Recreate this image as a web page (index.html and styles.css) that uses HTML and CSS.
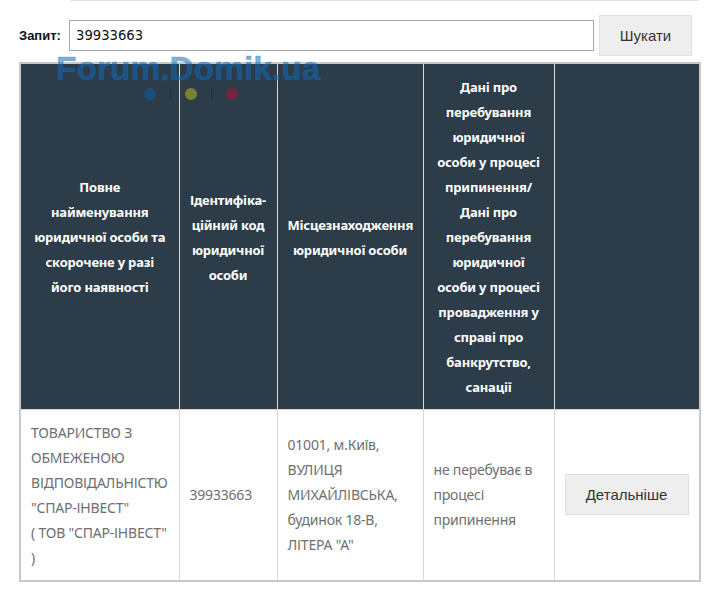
FILE: index.html
```html
<!DOCTYPE html>
<html lang="uk">
<head>
<meta charset="utf-8">
<title>Пошук</title>
<link rel="stylesheet" href="styles.css">
</head>
<body>
<div class="page">
  <div class="rule"></div>
  <form class="search">
    <label class="search-label" for="q">Запит:</label>
    <input class="search-input" id="q" type="text" value="39933663">
    <button class="btn btn-search" type="button">Шукати</button>
  </form>
  <table class="results">
    <colgroup>
      <col class="c1"><col class="c2"><col class="c3"><col class="c4"><col class="c5">
    </colgroup>
    <thead>
      <tr>
        <th>Повне найменування юридичної особи та скорочене у разі його наявності</th>
        <th>Ідентифіка-<br>ційний код юридичної особи</th>
        <th>Місцезнаходження юридичної особи</th>
        <th>Дані про перебування юридичної особи у процесі припинення/<br>Дані про перебування юридичної особи у процесі провадження у справі про банкрутство, санації</th>
        <th></th>
      </tr>
    </thead>
    <tbody>
      <tr>
        <td>ТОВАРИСТВО З ОБМЕЖЕНОЮ ВІДПОВІДАЛЬНІСТЮ "СПАР-ІНВЕСТ"<br>( ТОВ "СПАР-ІНВЕСТ" )</td>
        <td>39933663</td>
        <td>01001, м.Київ, ВУЛИЦЯ МИХАЙЛІВСЬКА, будинок 18-В, ЛІТЕРА "А"</td>
        <td>не перебуває в процесі припинення</td>
        <td><button class="btn btn-more" type="button">Детальніше</button></td>
      </tr>
    </tbody>
  </table>
  <div class="watermark">
    <div class="wm-text">Forum.Domik.ua</div>
    <div class="wm-dots">
      <span class="dot dot-blue"></span><span class="sep"></span>
      <span class="dot dot-green"></span><span class="sep"></span>
      <span class="dot dot-red"></span>
    </div>
  </div>
</div>
</body>
</html>
```
FILE: styles.css
```css
* { box-sizing: border-box; }
html, body { margin: 0; padding: 0; background: #fff; }
.page {
  position: relative;
  width: 708px;
  height: 596px;
  overflow: hidden;
  font-family: "Noto Sans", "Open Sans", sans-serif;
}
.rule {
  height: 1px;
  margin-left: 70px;
  margin-right: 9px;
  background: #e2e2e2;
}
.search {
  display: flex;
  align-items: center;
  height: 40px;
  margin-top: 14px;
  padding-left: 19px;
}
.search-label {
  width: 50px;
  font: bold 13px/1 "Liberation Sans", sans-serif;
  color: #111;
}
.search-input {
  width: 525px;
  height: 31px;
  padding: 0 6px;
  border: 1px solid #a9a9a9;
  border-radius: 0;
  outline: none;
  font: 13.2px "DejaVu Sans", sans-serif;
  color: #111;
  background: #fff;
}
.btn {
  border: 1px solid #e0e0e0;
  background: #eee;
  color: #333;
  font: 15px "Liberation Sans", sans-serif;
  padding: 0;
}
.btn-search {
  width: 93px;
  height: 41px;
  margin-left: 5px;
}
.results {
  width: 680px;
  margin: 7px 0 0 19px;
  border-collapse: collapse;
  table-layout: fixed;
  border: 2px solid #c9c9c9;
  line-height: 25px;
}
.c1 { width: 159px; }
.c2 { width: 98px; }
.c3 { width: 146px; }
.c4 { width: 131px; }
.c5 { width: 146px; }
.results th {
  padding: 11px 10px 9px;
  background: #2d3c49;
  color: #fff;
  font-weight: 700;
  font-size: 13px;
  text-align: center;
  vertical-align: middle;
  border: 1px solid #d8d8d8;
  border-top: 0;
  border-bottom: 0;
  letter-spacing: -0.2px;
}
.results td {
  padding: 10px;
  color: #6f6f6f;
  font-size: 14px;
  vertical-align: middle;
  border: 1px solid #d8d8d8;
  border-bottom: 0;
  letter-spacing: -0.2px;
}
.results td + td {
  padding: 9px 10px 11px;
}
.btn-more {
  display: block;
  width: 124px;
  height: 41px;
}
.watermark {
  position: absolute;
  left: 56px;
  top: 52px;
  width: 266px;
  pointer-events: none;
}
.wm-text {
  font: bold 33.5px/34px "Liberation Sans", sans-serif;
  -webkit-text-stroke: 0.5px rgba(15, 107, 186, 0.55);
  color: rgba(15, 107, 186, 0.55);
  white-space: nowrap;
}
.wm-dots {
  display: flex;
  align-items: center;
  margin: 2px 0 0 88px;
}
.dot {
  width: 12px;
  height: 12px;
  border-radius: 50%;
}
.dot-blue { background: #1d4d80; }
.dot-green { background: #7a8032; }
.dot-red { background: #75233f; }
.sep {
  width: 1px;
  height: 12px;
  margin: 0 14px 0 14px;
  background: rgba(0, 0, 0, 0.2);
}
```
